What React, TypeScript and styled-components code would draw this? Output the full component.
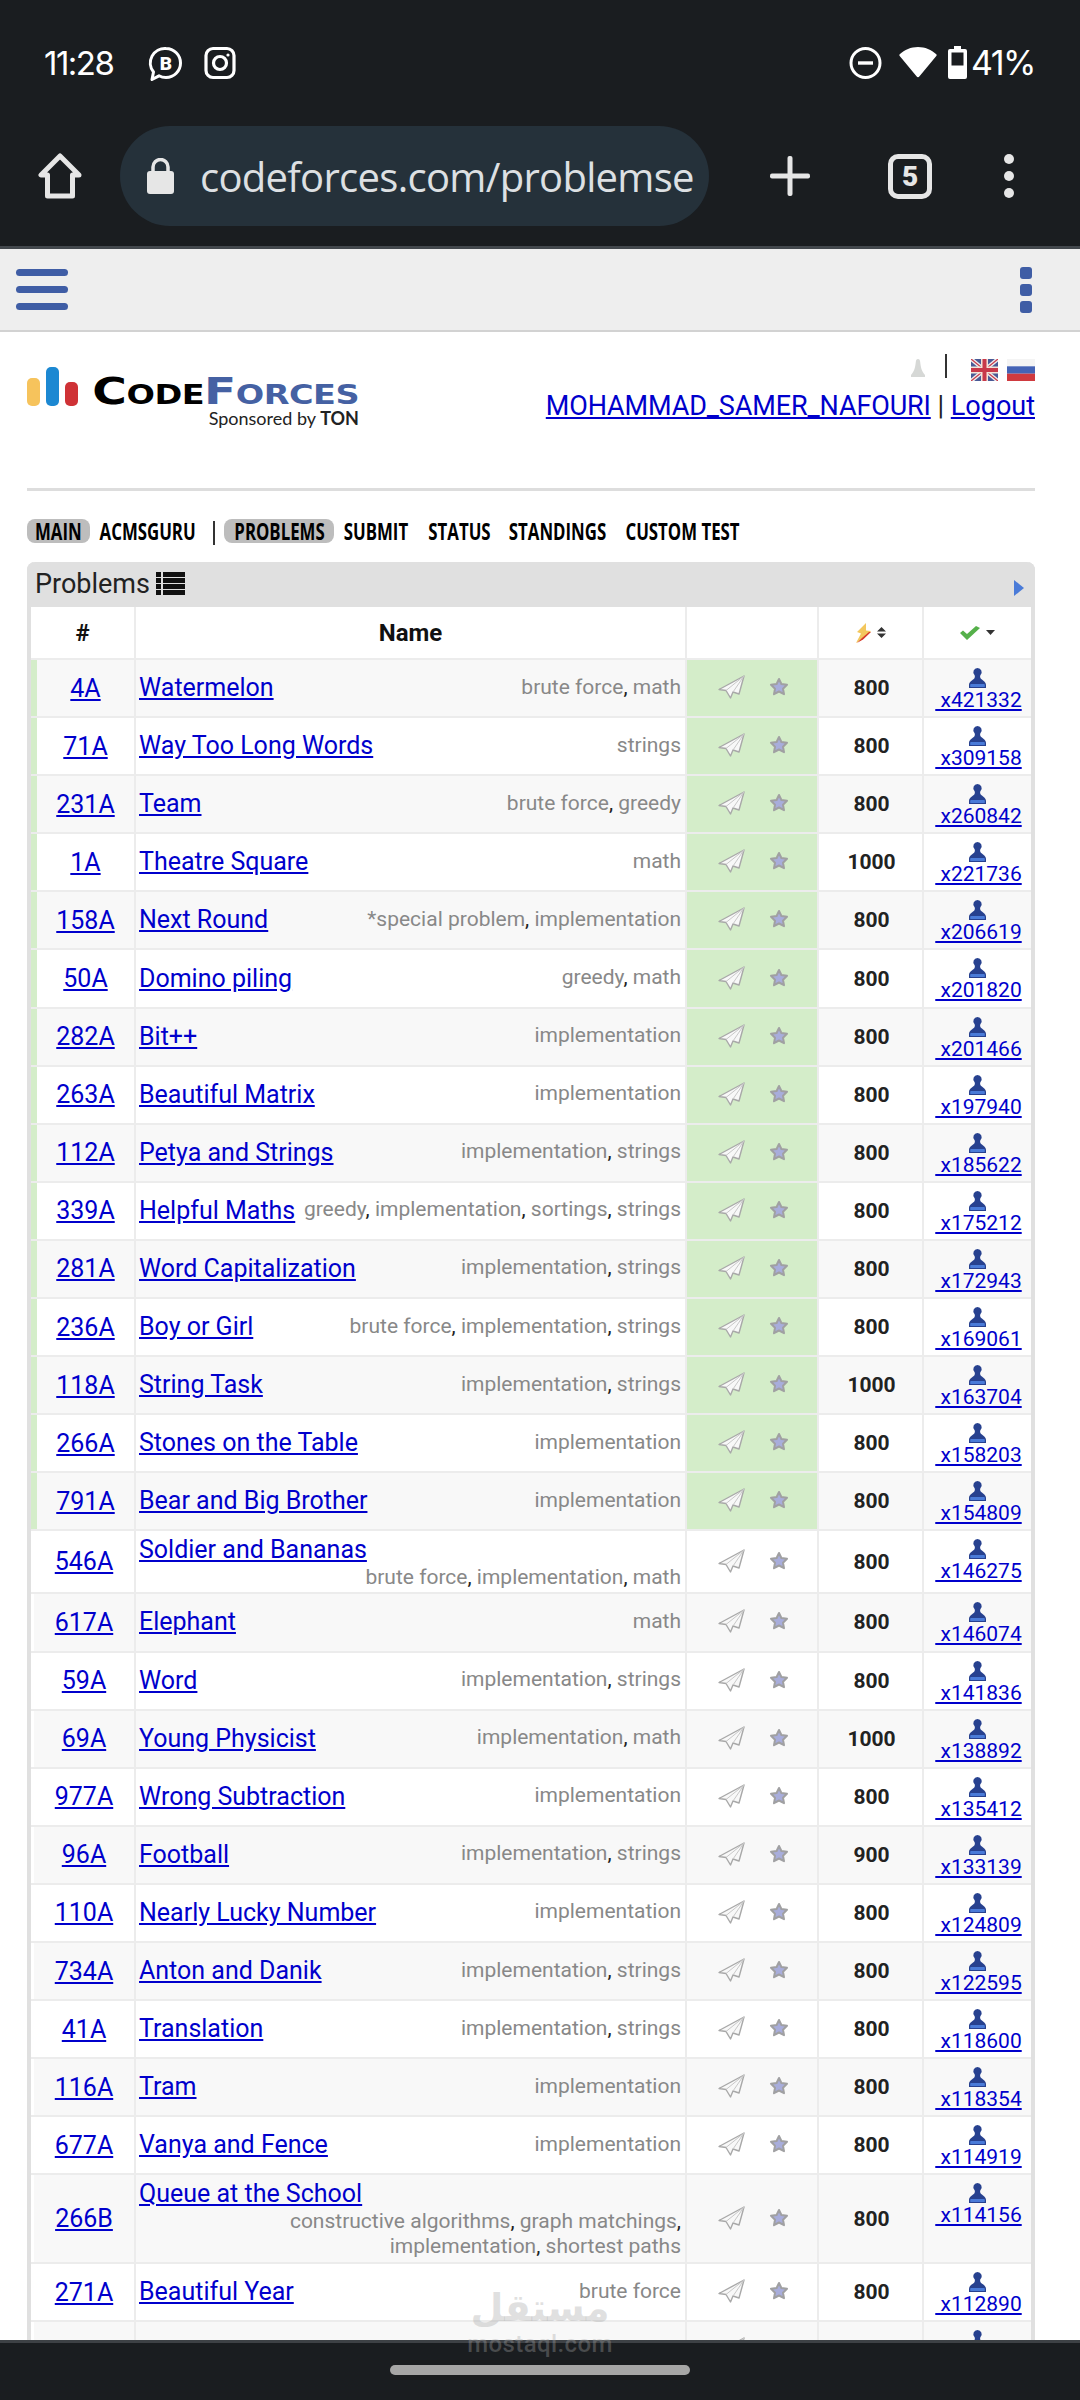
import React from 'react'
import styled, { createGlobalStyle } from 'styled-components'

type Problem = {
  id: string
  name: string
  tags: string[]
  rating: number
  solved: string
  done?: boolean
  stacked?: boolean
  tall?: boolean
}

const impl = 'implementation'
const str = 'strings'

const problems: Problem[] = [
  { id: '4A', name: 'Watermelon', tags: ['brute force', 'math'], rating: 800, solved: 'x421332', done: true },
  { id: '71A', name: 'Way Too Long Words', tags: [str], rating: 800, solved: 'x309158', done: true },
  { id: '231A', name: 'Team', tags: ['brute force', 'greedy'], rating: 800, solved: 'x260842', done: true },
  { id: '1A', name: 'Theatre Square', tags: ['math'], rating: 1000, solved: 'x221736', done: true },
  { id: '158A', name: 'Next Round', tags: ['*special problem', impl], rating: 800, solved: 'x206619', done: true },
  { id: '50A', name: 'Domino piling', tags: ['greedy', 'math'], rating: 800, solved: 'x201820', done: true },
  { id: '282A', name: 'Bit++', tags: [impl], rating: 800, solved: 'x201466', done: true },
  { id: '263A', name: 'Beautiful Matrix', tags: [impl], rating: 800, solved: 'x197940', done: true },
  { id: '112A', name: 'Petya and Strings', tags: [impl, str], rating: 800, solved: 'x185622', done: true },
  { id: '339A', name: 'Helpful Maths', tags: ['greedy', impl, 'sortings', str], rating: 800, solved: 'x175212', done: true },
  { id: '281A', name: 'Word Capitalization', tags: [impl, str], rating: 800, solved: 'x172943', done: true },
  { id: '236A', name: 'Boy or Girl', tags: ['brute force', impl, str], rating: 800, solved: 'x169061', done: true },
  { id: '118A', name: 'String Task', tags: [impl, str], rating: 1000, solved: 'x163704', done: true },
  { id: '266A', name: 'Stones on the Table', tags: [impl], rating: 800, solved: 'x158203', done: true },
  { id: '791A', name: 'Bear and Big Brother', tags: [impl], rating: 800, solved: 'x154809', done: true },
  { id: '546A', name: 'Soldier and Bananas', tags: ['brute force', impl, 'math'], rating: 800, solved: 'x146275', stacked: true },
  { id: '617A', name: 'Elephant', tags: ['math'], rating: 800, solved: 'x146074' },
  { id: '59A', name: 'Word', tags: [impl, str], rating: 800, solved: 'x141836' },
  { id: '69A', name: 'Young Physicist', tags: [impl, 'math'], rating: 1000, solved: 'x138892' },
  { id: '977A', name: 'Wrong Subtraction', tags: [impl], rating: 800, solved: 'x135412' },
  { id: '96A', name: 'Football', tags: [impl, str], rating: 900, solved: 'x133139' },
  { id: '110A', name: 'Nearly Lucky Number', tags: [impl], rating: 800, solved: 'x124809' },
  { id: '734A', name: 'Anton and Danik', tags: [impl, str], rating: 800, solved: 'x122595' },
  { id: '41A', name: 'Translation', tags: [impl, str], rating: 800, solved: 'x118600' },
  { id: '116A', name: 'Tram', tags: [impl], rating: 800, solved: 'x118354' },
  { id: '677A', name: 'Vanya and Fence', tags: [impl], rating: 800, solved: 'x114919' },
  { id: '266B', name: 'Queue at the School', tags: ['constructive algorithms', 'graph matchings', impl, 'shortest paths'], rating: 800, solved: 'x114156', stacked: true, tall: true },
  { id: '271A', name: 'Beautiful Year', tags: ['brute force'], rating: 800, solved: 'x112890' },
]

const GlobalStyle = createGlobalStyle`
  html, body {
    margin: 0;
    padding: 0;
    background: #fff;
  }
  body {
    font-family: Roboto, "Liberation Sans", sans-serif;
  }
`

const Screen = styled.div`
  position: relative;
  width: 1080px;
  height: 2400px;
  overflow: hidden;
  background: #fff;
`

const Chrome = styled.div`
  height: 246px;
  background: #1a1d20;
  border-bottom: 3px solid #43484d;
  color: #fff;
`

const StatusBar = styled.div`
  height: 126px;
  box-sizing: border-box;
  padding: 46px 45px 0 44px;
  display: flex;
  align-items: flex-start;
  font-family: Inter, Roboto, sans-serif;
`

const Clock = styled.span`
  font-size: 33px;
  line-height: 34px;
  width: 103px;
  letter-spacing: -1.5px;
`

const StatusLeft = styled.div`
  display: flex;
  gap: 21px;
  flex: 1;
`

const StatusRight = styled.div`
  display: flex;
  align-items: flex-start;
`

const Percent = styled.span`
  font-size: 34px;
  line-height: 34px;
  letter-spacing: -1.5px;
  margin-left: 4px;
`

const Toolbar = styled.div`
  height: 100px;
  display: flex;
  align-items: center;
  padding-left: 38px;
`

const UrlPill = styled.div`
  width: 589px;
  height: 100px;
  margin-left: 38px;
  box-sizing: border-box;
  padding: 0 15px 0 27px;
  border-radius: 50px;
  background: #25313a;
  display: flex;
  align-items: center;
  gap: 26px;
`

const UrlText = styled.span`
  flex: 1;
  overflow: hidden;
  white-space: nowrap;
  font-family: "Open Sans", sans-serif;
  font-size: 40px;
  letter-spacing: -0.7px;
  color: #dde0e3;
`

const TabCount = styled.div`
  width: 44px;
  height: 45px;
  box-sizing: border-box;
  margin-left: 78px;
  border: 5px solid #e6e6e6;
  border-radius: 10px;
  font-size: 28px;
  font-weight: 900;
  color: #e6e6e6;
  display: flex;
  align-items: center;
  justify-content: center;
`

const ToolDots = styled.div`
  margin-left: 72px;
  display: flex;
  flex-direction: column;
  gap: 7px;
`

const ToolDot = styled.i`
  display: block;
  width: 10px;
  height: 10px;
  border-radius: 50%;
  background: #e6e6e6;
`

const SiteBar = styled.div`
  height: 81px;
  background: #eee;
  border-bottom: 2px solid #d2d2d2;
  display: flex;
  justify-content: space-between;
  align-items: center;
  padding: 0 48px 0 16px;
`

const Burger = styled.div`
  display: flex;
  flex-direction: column;
  gap: 10px;
`

const BurgerLine = styled.i`
  display: block;
  width: 52px;
  height: 7px;
  border-radius: 4px;
  background: #3f5da5;
`

const Kebab = styled.div`
  display: flex;
  flex-direction: column;
  gap: 5px;
`

const KebabDot = styled.i`
  display: block;
  width: 12px;
  height: 12px;
  border-radius: 3px;
  background: #3f5da5;
`

const Content = styled.div`
  padding: 0 45px 0 27px;
`

const Masthead = styled.div`
  height: 159px;
  display: flex;
  justify-content: space-between;
  padding-top: 22px;
  box-sizing: border-box;
  border-bottom: 3px solid #ddd;
`

const Logo = styled.div`
  display: flex;
  align-items: flex-start;
  padding-top: 13px;
`

const LogoBars = styled.div`
  display: flex;
  align-items: flex-end;
  gap: 6px;
  height: 39px;
  margin-right: 16px;
`

const LogoBar = styled.i<{ $color: string; $h: number }>`
  display: block;
  width: 13px;
  height: ${(p) => p.$h}px;
  border-radius: 5px;
  background: ${(p) => p.$color};
`

const LogoText = styled.div`
  display: flex;
  flex-direction: column;
  align-items: flex-end;
  width: 265px;
`

const LogoWord = styled.div`
  font-family: "DejaVu Sans", sans-serif;
  font-weight: 700;
  font-size: 38px;
  line-height: 29px;
  height: 29px;
  margin-top: 10px;
  white-space: nowrap;
  letter-spacing: -0.4px;
  font-variant: small-caps;
  transform: scaleX(1.24);
  transform-origin: right center;
`

const LogoCode = styled.span`
  color: #000;
`

const LogoForces = styled.span`
  color: #4561a3;
`

const Sponsored = styled.div`
  font-family: Lato, sans-serif;
  font-size: 18px;
  line-height: 18px;
  color: #222;
  margin-top: 3px;
  white-space: nowrap;
`

const Ton = styled.b`
  font-weight: 700;
`

const UserBox = styled.div`
  display: flex;
  flex-direction: column;
  align-items: flex-end;
`

const LangRow = styled.div`
  display: flex;
  align-items: flex-start;
  height: 36px;
`

const LangDivider = styled.i`
  display: block;
  width: 2px;
  height: 24px;
  margin: 0 24px 0 18px;
  background: #333;
`

const Flags = styled.div`
  display: flex;
  gap: 9px;
  margin-top: 5px;
`

const UserLine = styled.div`
  font-size: 27px;
  line-height: 32px;
  color: #222;
`

const BlueLink = styled.a`
  color: #0000cc;
  text-decoration: underline;
`

const UserLink = styled(BlueLink)`
  letter-spacing: -0.12px;
`

const MainMenu = styled.nav`
  display: flex;
  align-items: center;
  height: 71px;
  padding-top: 9px;
  box-sizing: border-box;
  font-family: "Open Sans", sans-serif;
  font-weight: 700;
  font-size: 24px;
  color: #000;
`

const MenuItem = styled.span<{ $active?: boolean; $width: number; $gap?: number }>`
  display: flex;
  justify-content: center;
  width: ${(p) => p.$width}px;
  margin-right: ${(p) => p.$gap ?? 0}px;
  line-height: 24px;
  white-space: nowrap;
  border-radius: 8px;
  background: ${(p) => (p.$active ? '#bdbdbd' : 'transparent')};
`

const MenuLabel = styled.span`
  display: block;
  flex: none;
  transform: scaleX(0.7);
`

const MenuDivider = styled.i`
  display: block;
  width: 2px;
  height: 24px;
  background: #333;
  margin: 3px 9px 0 19px;
`

const Panel = styled.section`
  border: solid #e0e0e0;
  border-width: 0 4px;
  border-radius: 8px 8px 0 0;
`

const PanelTitle = styled.div`
  height: 45px;
  margin: 0 -4px;
  padding: 0 11px 2px 8px;
  box-sizing: border-box;
  background: #e0e0e0;
  border-radius: 8px 8px 0 0;
  display: flex;
  align-items: center;
  font-size: 27px;
  color: #222;
  gap: 6px;
`

const TitleSpacer = styled.span`
  flex: 1;
`

const cols = '105px 551px 132px 105px 107px'

const HeadRow = styled.div`
  display: grid;
  grid-template-columns: ${cols};
  height: 51px;
  background: #fff;
  border-radius: 8px 8px 0 0;
  border-bottom: 2px solid #ececec;
  box-sizing: content-box;
`

const HeadCell = styled.div`
  display: flex;
  align-items: center;
  justify-content: center;
  gap: 6px;
  font-size: 24px;
  font-weight: 700;
  color: #111;
  border-right: 2px solid #ececec;
  &:last-child {
    border-right: 0;
  }
`

const Row = styled.div<{ $stripe: boolean; $height: number }>`
  display: grid;
  grid-template-columns: ${cols};
  height: ${(p) => p.$height}px;
  box-sizing: border-box;
  background: ${(p) => (p.$stripe ? '#f8f8f8' : '#fff')};
  border-bottom: 2px solid #ececec;
`

const IdCell = styled.div<{ $done?: boolean }>`
  display: flex;
  align-items: center;
  justify-content: center;
  font-size: 25px;
  background: inherit;
  border-left: ${(p) => (p.$done ? '6px solid #d4edc9' : '3px solid #fff')};
  border-right: 2px solid #ececec;
`

const NameCell = styled.div<{ $stacked?: boolean }>`
  display: flex;
  flex-direction: ${(p) => (p.$stacked ? 'column' : 'row')};
  justify-content: ${(p) => (p.$stacked ? 'flex-start' : 'space-between')};
  align-items: ${(p) => (p.$stacked ? 'stretch' : 'center')};
  padding: ${(p) => (p.$stacked ? '4px' : '0')} 4px 0 3px;
  border-right: 2px solid #ececec;
  font-size: 25px;
  white-space: nowrap;
`

const NameLink = styled(BlueLink)<{ $stacked?: boolean }>`
  align-self: ${(p) => (p.$stacked ? 'flex-start' : 'auto')};
  line-height: 30px;
`

const Tags = styled.div<{ $stacked?: boolean }>`
  font-size: 21px;
  line-height: 25px;
  color: #222;
  text-align: right;
  white-space: ${(p) => (p.$stacked ? 'normal' : 'nowrap')};
  margin-top: ${(p) => (p.$stacked ? '0' : '-2px')};
  padding-left: ${(p) => (p.$stacked ? '120px' : '0')};
`

const Tag = styled.span`
  color: #888;
`

const ActionCell = styled.div<{ $done?: boolean }>`
  display: flex;
  align-items: center;
  padding-left: 31px;
  gap: 24px;
  padding-bottom: 2px;
  background: ${(p) => (p.$done ? '#d4edc9' : 'transparent')};
  border-right: 2px solid #ececec;
`

const RatingCell = styled.div`
  display: flex;
  align-items: center;
  justify-content: center;
  padding-left: 2px;
  font-size: 21px;
  font-weight: 700;
  color: #222;
  border-right: 2px solid #ececec;
`

const SolvedCell = styled.div`
  display: flex;
  flex-direction: column;
  align-items: center;
  padding-top: 8px;
  font-size: 21px;
  line-height: 25px;
`

const SolvedLink = styled(BlueLink)`
  white-space: pre;
  margin-left: 2px;
`

const Watermark = styled.div`
  position: absolute;
  left: 460px;
  top: 2285px;
  width: 160px;
  text-align: center;
  color: rgba(165, 165, 165, 0.34);
  font-family: "DejaVu Sans", sans-serif;
  font-weight: 700;
  pointer-events: none;
  z-index: 3;
`

const WatermarkAr = styled.div`
  font-size: 38px;
  line-height: 46px;
`

const WatermarkEn = styled.div`
  font-family: Roboto, sans-serif;
  font-weight: 500;
  font-size: 24px;
  line-height: 26px;
  letter-spacing: 0.4px;
`

const NavBar = styled.div`
  position: absolute;
  left: 0;
  right: 0;
  bottom: 0;
  height: 35px;
  background: #1a1d20;
  border-top: 3px solid #3d4145;
  display: flex;
  justify-content: center;
  padding-top: 22px;
  z-index: 2;
`

const NavPill = styled.i`
  display: block;
  width: 300px;
  height: 10px;
  border-radius: 5px;
  background: #a6a6a6;
`

const WhatsAppB = () => (
  <svg width="36" height="36" viewBox="0 0 36 36" fill="none">
    <path d="M19 2.500a14.500 14.500 0 0 1 0 29c-2.500 0-5-.6-7-1.700L5 33.500l1.500-7.500A14.500 14.500 0 0 1 19 2.500z" stroke="#fff" strokeWidth="3" strokeLinejoin="round" />
    <text x="19" y="23.500" textAnchor="middle" fontFamily="Roboto, sans-serif" fontWeight="900" fontSize="19" fill="#fff">B</text>
  </svg>
)

const Instagram = () => (
  <svg width="32" height="34" viewBox="0 0 32 34" fill="none" stroke="#fff" strokeWidth="3.200">
    <rect x="2" y="2.500" width="28" height="29" rx="7" />
    <circle cx="16" cy="17" r="6.500" />
    <circle cx="24" cy="9" r="1.600" fill="#fff" stroke="none" />
  </svg>
)

const Dnd = () => (
  <svg width="33" height="34" viewBox="0 0 33 34" fill="none" style={{ marginRight: 17 }}>
    <circle cx="16.500" cy="17" r="14.500" stroke="#fff" strokeWidth="3" />
    <rect x="9" y="15.300" width="15" height="3.400" fill="#fff" />
  </svg>
)

const Wifi = () => (
  <svg width="38" height="32" viewBox="0 0 38 32" style={{ marginRight: 11 }}>
    <path d="M19 1c7 0 13.500 2.800 18.300 7.200.5.500.5 1.200 0 1.700L20.500 30.300a2 2 0 0 1-3 0L.7 9.900c-.5-.5-.5-1.200 0-1.700C5.500 3.800 12 1 19 1z" fill="#fff" />
  </svg>
)

const Battery = () => (
  <svg width="19" height="33" viewBox="0 0 19 33">
    <path d="M6 0h7v3h4a2 2 0 0 1 2 2v26a2 2 0 0 1-2 2H2a2 2 0 0 1-2-2V5a2 2 0 0 1 2-2h4z" fill="#fff" />
    <rect x="3.500" y="6.500" width="12" height="13" fill="#1a1d20" />
  </svg>
)

const HomeIcon = () => (
  <svg width="44" height="46" viewBox="0 0 44 46" fill="none" stroke="#e6e6e6" strokeWidth="5" strokeLinejoin="round">
    <path d="M22 3 3 22h6.500v21h25V22H41z" />
  </svg>
)

const LockIcon = () => (
  <svg width="27" height="36" viewBox="0 0 27 36">
    <path d="M6 14V9a7.500 7.500 0 0 1 15 0v5" fill="none" stroke="#e6e6e6" strokeWidth="3.500" />
    <rect x="0" y="13" width="27" height="23" rx="3" fill="#e6e6e6" />
  </svg>
)

const PlusIcon = () => (
  <svg width="40" height="40" viewBox="0 0 40 40" style={{ marginLeft: 61 }}>
    <rect x="0" y="17.500" width="40" height="5" rx="2" fill="#e6e6e6" />
    <rect x="17.500" y="0" width="5" height="40" rx="2" fill="#e6e6e6" />
  </svg>
)

const BellIcon = () => (
  <svg width="18" height="20" viewBox="0 0 18 20" style={{ marginTop: 5 }}>
    <path d="M9 0c1.500 0 2 1 2.200 3 .5 5 1.300 9 4.800 13v2H2v-2c3.500-4 4.300-8 4.800-13C7 1 7.500 0 9 0z" fill="#d6d8d6" />
  </svg>
)

const FlagGb = () => (
  <svg width="27" height="22" viewBox="0 0 27 22">
    <rect width="27" height="22" fill="#4a5a96" />
    <path d="M0 0l27 22M27 0 0 22" stroke="#eee" strokeWidth="4" />
    <path d="M0 0l27 22M27 0 0 22" stroke="#c8394a" strokeWidth="1.300" />
    <path d="M13.500 0v22M0 11h27" stroke="#f3e3d8" strokeWidth="7" />
    <path d="M13.500 0v22M0 11h27" stroke="#c8394a" strokeWidth="4" />
  </svg>
)

const FlagRu = () => (
  <svg width="28" height="22" viewBox="0 0 28 22">
    <rect width="28" height="7.300" fill="#f4f4f4" />
    <rect y="7.300" width="28" height="7.400" fill="#4463b5" />
    <rect y="14.700" width="28" height="7.300" fill="#cf3a3f" />
  </svg>
)

const ListIcon = () => (
  <svg width="29" height="23" viewBox="0 0 29 23" fill="#111">
    <rect x="0" y="0" width="5" height="5" />
    <rect x="7" y="0" width="22" height="5" />
    <rect x="0" y="6" width="5" height="5" />
    <rect x="7" y="6" width="22" height="5" />
    <rect x="0" y="12" width="5" height="5" />
    <rect x="7" y="12" width="22" height="5" />
    <rect x="0" y="18" width="5" height="5" />
    <rect x="7" y="18" width="22" height="5" />
  </svg>
)

const SideArrow = () => (
  <svg width="10" height="16" viewBox="0 0 10 16" style={{ marginTop: 8 }}>
    <path d="M0 0l10 8-10 8z" fill="#4a7bd8" />
  </svg>
)

const Bolt = () => (
  <svg width="15" height="20" viewBox="0 0 15 20">
    <path d="M10 0 1 9l4 1.500L0 20l8-4.500L15 8l-5-.5z" fill="#f3c75d" />
    <path d="M13 9 6 15 1 20l6-3.500L15 9z" fill="#d5362c" />
  </svg>
)

const SortArrows = () => (
  <svg width="9" height="11" viewBox="0 0 9 11" fill="#333">
    <path d="M4.500 0 9 4.500H0zM4.500 11 0 6.500h9z" />
  </svg>
)

const CheckMark = () => (
  <svg width="20" height="14" viewBox="0 0 20 14">
    <path d="M0 7l3-2.500 4 3.500L16 0l4 2L7 14z" fill="#55b04a" />
  </svg>
)

const Caret = () => (
  <svg width="9" height="5" viewBox="0 0 9 5">
    <path d="M0 0h9L4.500 5z" fill="#333" />
  </svg>
)

const Plane = () => (
  <svg width="27" height="24" viewBox="0 0 27 24">
    <path d="M26 1 1 14.500l7 1 4.500 7.500 2.500-6 6 2z" fill="#f8f8f8" stroke="#a8a8a8" strokeWidth="1.400" strokeLinejoin="round" />
    <path d="M26 1 8 15.500M26 1 15 17" fill="none" stroke="#c8c8c8" strokeWidth="1" />
  </svg>
)

const Star = () => (
  <svg width="20" height="20" viewBox="0 0 20 20">
    <path d="M10 2l2.400 5 5.600.8-4 3.900 1 5.500-5-2.700-5 2.700 1-5.500-4-3.900 5.600-.8z" fill="#a8addb" stroke="#a0a0a2" strokeWidth="2" strokeLinejoin="round" />
  </svg>
)

const UserIcon = () => (
  <svg width="17" height="20" viewBox="0 0 17 20">
    <path d="M8.500 0a4.200 4.200 0 0 1 3 7.100c-.5.600-.6 2.400.2 3.400 1 1.300 5.300 3 5.300 6.500v3H0v-3c0-3.500 4.300-5.200 5.300-6.500.8-1 .7-2.800.2-3.400A4.200 4.200 0 0 1 8.500 0z" fill="#27418f" />
    <path d="M1.500 16h14c.5 1 .5 2 .2 3H1.300c-.3-1-.3-2 .2-3z" fill="#4a7bd8" />
  </svg>
)

const TagList = ({ tags, stacked }: { tags: string[]; stacked?: boolean }) => (
  <Tags $stacked={stacked}>
    {tags.map((tag, i) => (
      <React.Fragment key={tag}>
        <Tag>{tag}</Tag>
        {i < tags.length - 1 ? ', ' : ''}
      </React.Fragment>
    ))}
  </Tags>
)

const rowHeight = (p: Problem) => (p.tall ? 89 : p.stacked ? 63 : 58.1)

const ProblemRow = ({ problem, stripe }: { problem: Problem; stripe: boolean }) => (
  <Row $stripe={stripe} $height={rowHeight(problem)}>
    <IdCell $done={problem.done}>
      <BlueLink>{problem.id}</BlueLink>
    </IdCell>
    <NameCell $stacked={problem.stacked}>
      <NameLink $stacked={problem.stacked}>{problem.name}</NameLink>
      <TagList tags={problem.tags} stacked={problem.stacked} />
    </NameCell>
    <ActionCell $done={problem.done}>
      <Plane />
      <Star />
    </ActionCell>
    <RatingCell>{problem.rating}</RatingCell>
    <SolvedCell>
      <UserIcon />
      <SolvedLink>{' ' + problem.solved}</SolvedLink>
    </SolvedCell>
  </Row>
)

export default function App() {
  return (
    <Screen>
      <GlobalStyle />
      <Chrome>
        <StatusBar>
          <Clock>11:28</Clock>
          <StatusLeft>
            <WhatsAppB />
            <Instagram />
          </StatusLeft>
          <StatusRight>
            <Dnd />
            <Wifi />
            <Battery />
            <Percent>41%</Percent>
          </StatusRight>
        </StatusBar>
        <Toolbar>
          <HomeIcon />
          <UrlPill>
            <LockIcon />
            <UrlText>codeforces.com/problemse</UrlText>
          </UrlPill>
          <PlusIcon />
          <TabCount>5</TabCount>
          <ToolDots>
            <ToolDot />
            <ToolDot />
            <ToolDot />
          </ToolDots>
        </Toolbar>
      </Chrome>
      <SiteBar>
        <Burger>
          <BurgerLine />
          <BurgerLine />
          <BurgerLine />
        </Burger>
        <Kebab>
          <KebabDot />
          <KebabDot />
          <KebabDot />
        </Kebab>
      </SiteBar>
      <Content>
        <Masthead>
          <Logo>
            <LogoBars>
              <LogoBar $color="#f6c35c" $h={28} />
              <LogoBar $color="#1c88d2" $h={39} />
              <LogoBar $color="#cf3236" $h={24} />
            </LogoBars>
            <LogoText>
              <LogoWord>
                <LogoCode>Code</LogoCode>
                <LogoForces>Forces</LogoForces>
              </LogoWord>
              <Sponsored>
                Sponsored by <Ton>TON</Ton>
              </Sponsored>
            </LogoText>
          </Logo>
          <UserBox>
            <LangRow>
              <BellIcon />
              <LangDivider />
              <Flags>
                <FlagGb />
                <FlagRu />
              </Flags>
            </LangRow>
            <UserLine>
              <UserLink>MOHAMMAD_SAMER_NAFOURI</UserLink> | <BlueLink>Logout</BlueLink>
            </UserLine>
          </UserBox>
        </Masthead>
        <MainMenu>
          <MenuItem $active $width={63} $gap={11}><MenuLabel>MAIN</MenuLabel></MenuItem>
          <MenuItem $width={93}><MenuLabel>ACMSGURU</MenuLabel></MenuItem>
          <MenuDivider />
          <MenuItem $active $width={110} $gap={10}><MenuLabel>PROBLEMS</MenuLabel></MenuItem>
          <MenuItem $width={64} $gap={20}><MenuLabel>SUBMIT</MenuLabel></MenuItem>
          <MenuItem $width={62} $gap={20}><MenuLabel>STATUS</MenuLabel></MenuItem>
          <MenuItem $width={94} $gap={20}><MenuLabel>STANDINGS</MenuLabel></MenuItem>
          <MenuItem $width={116}><MenuLabel>CUSTOM TEST</MenuLabel></MenuItem>
        </MainMenu>
        <Panel>
          <PanelTitle>
            Problems
            <ListIcon />
            <TitleSpacer />
            <SideArrow />
          </PanelTitle>
          <HeadRow>
            <HeadCell>#</HeadCell>
            <HeadCell>Name</HeadCell>
            <HeadCell />
            <HeadCell>
              <Bolt />
              <SortArrows />
            </HeadCell>
            <HeadCell>
              <CheckMark />
              <Caret />
            </HeadCell>
          </HeadRow>
          {problems.map((problem, i) => (
            <ProblemRow key={problem.id} problem={problem} stripe={i % 2 === 0} />
          ))}
          <Row $stripe $height={58}>
            <IdCell />
            <NameCell />
            <ActionCell>
              <Plane />
              <Star />
            </ActionCell>
            <RatingCell />
            <SolvedCell>
              <UserIcon />
            </SolvedCell>
          </Row>
        </Panel>
      </Content>
      <Watermark>
        <WatermarkAr dir="rtl">مستقل</WatermarkAr>
        <WatermarkEn>mostaql.com</WatermarkEn>
      </Watermark>
      <NavBar>
        <NavPill />
      </NavBar>
    </Screen>
  )
}
